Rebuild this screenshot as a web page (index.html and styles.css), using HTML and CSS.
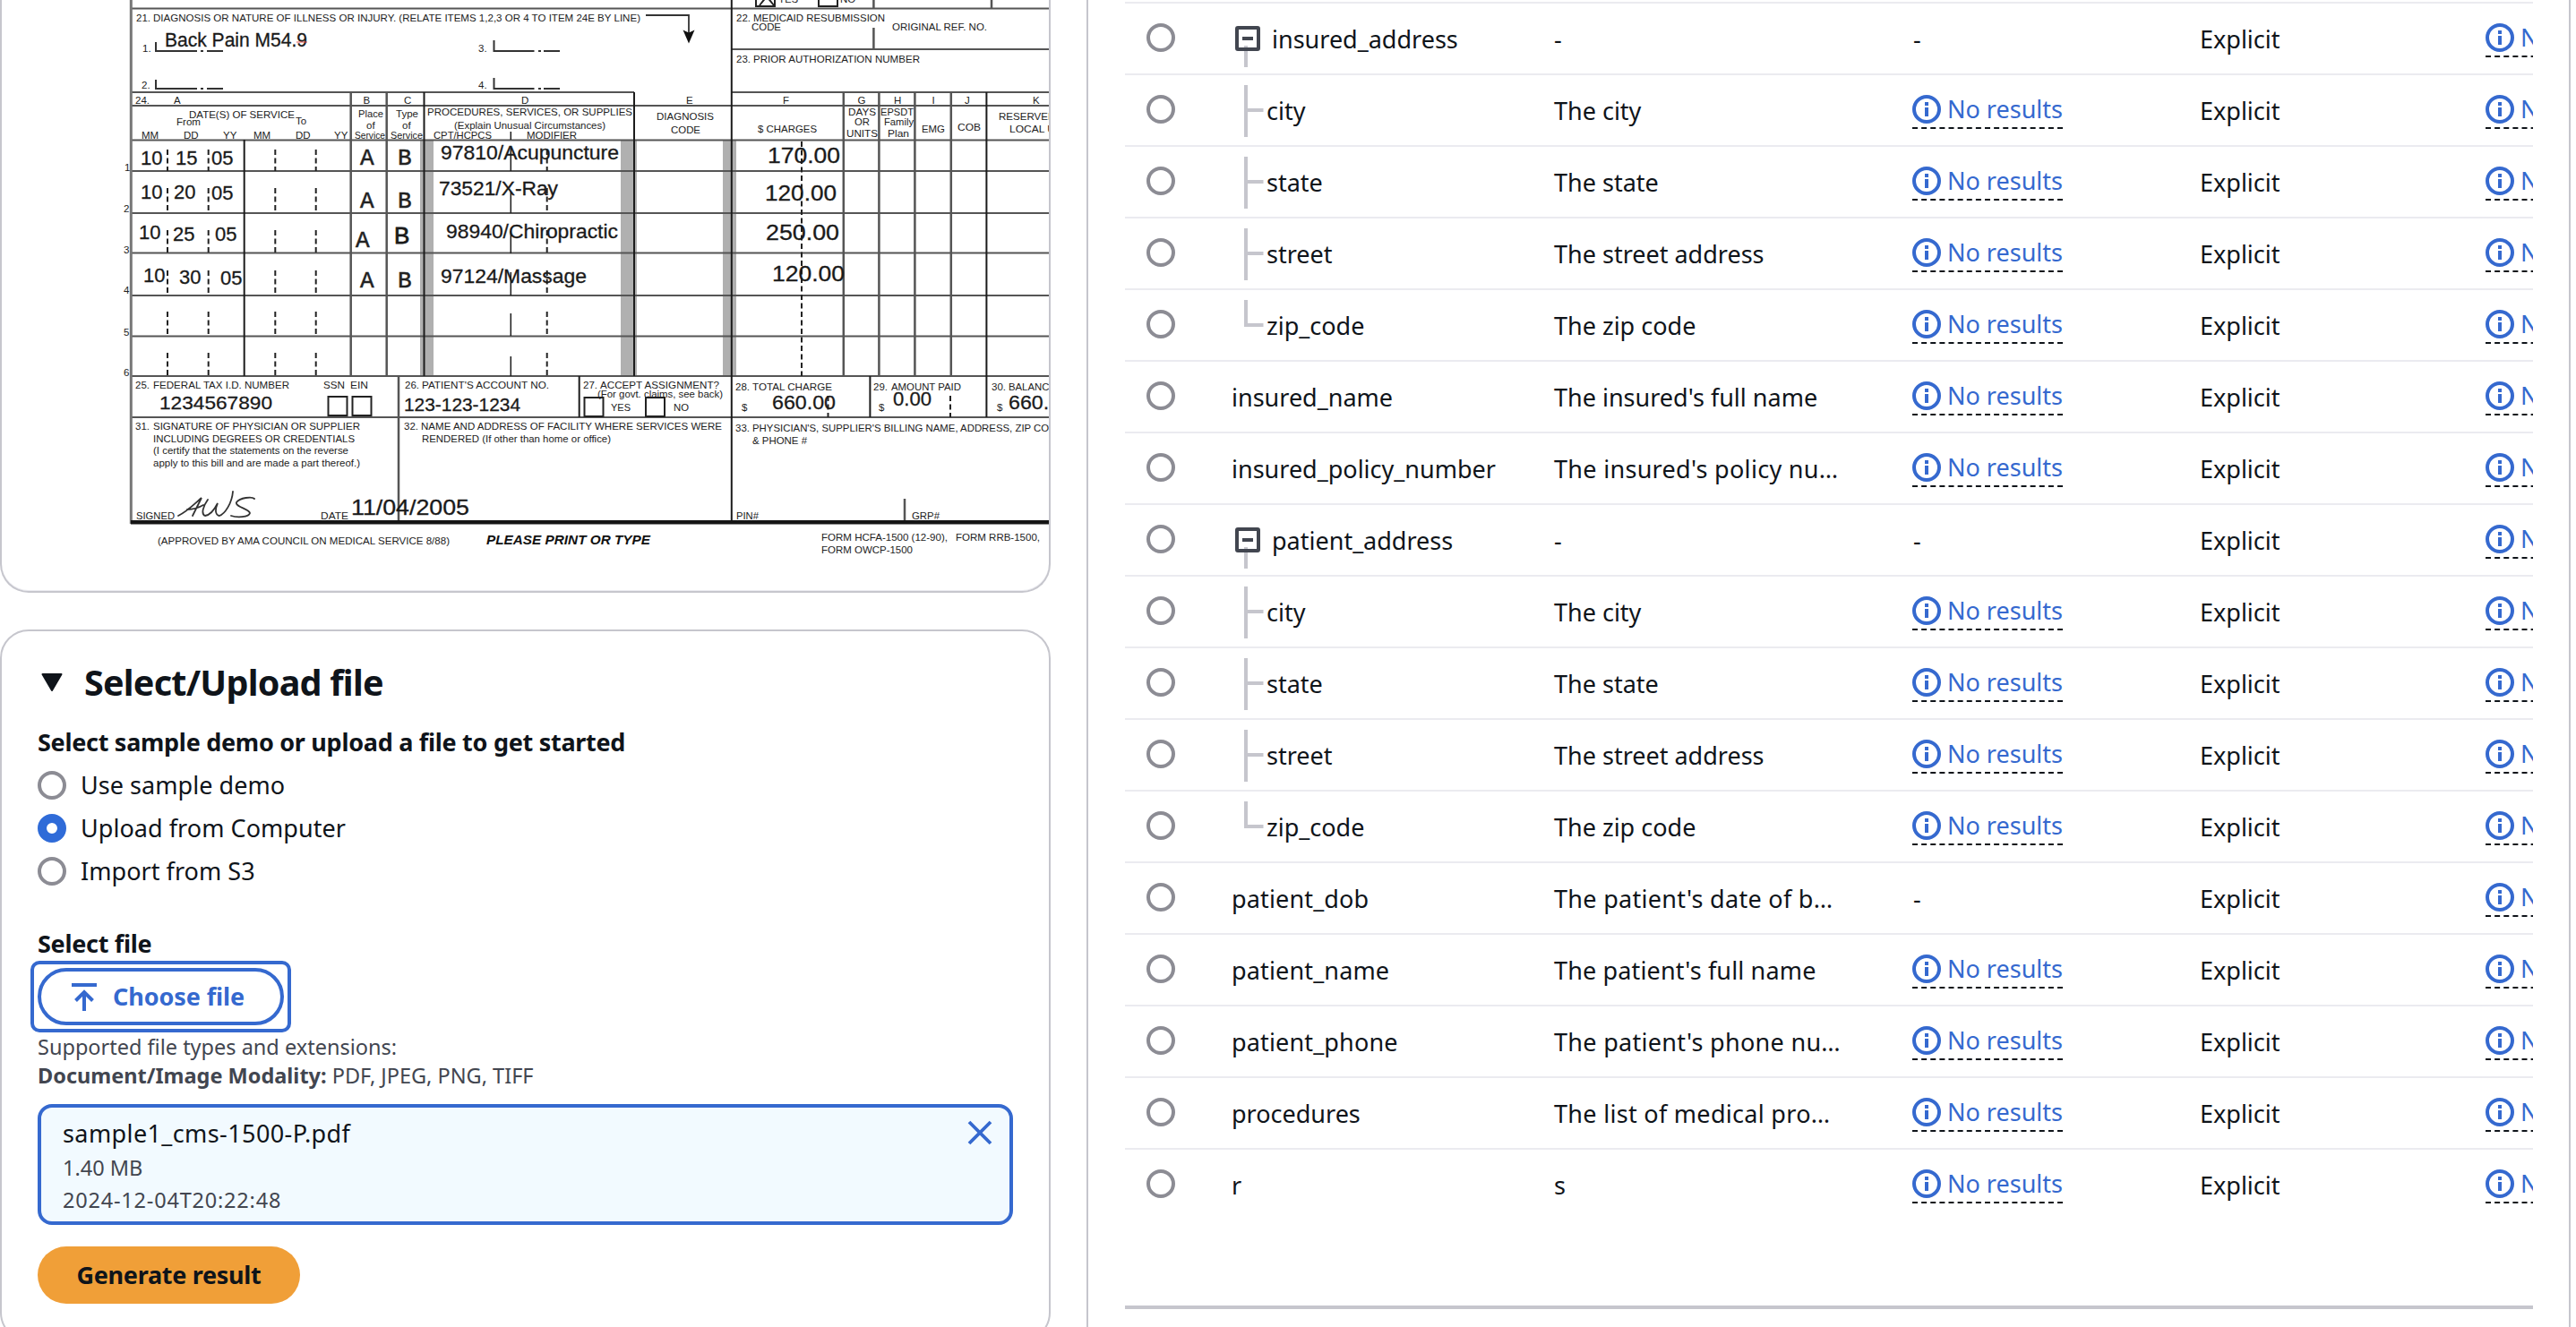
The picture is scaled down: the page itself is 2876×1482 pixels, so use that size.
FILE: index.html
```html
<!DOCTYPE html>
<html lang="en">
<head>
<meta charset="utf-8">
<title>Document processing</title>
<link rel="stylesheet" href="styles.css">
</head>
<body>
<svg width="0" height="0" class="defs">
  <symbol id="info" viewBox="0 0 32 32"><circle cx="16" cy="16" r="14" fill="none" stroke="currentColor" stroke-width="4"/><path d="M14 8h4v4h-4zM14 14h4v10h-4z" fill="currentColor"/></symbol>
  <symbol id="branch" viewBox="0 0 39 78"><path d="M17 11v58M17 39h19.500" fill="none" stroke="#c6c6cd" stroke-width="4"/></symbol>
  <symbol id="leaf" viewBox="0 0 39 78"><path d="M17 11v28h19.500" fill="none" stroke="#c6c6cd" stroke-width="4"/></symbol>
  <symbol id="root" viewBox="0 0 45 78"><path d="M17 47v24" stroke="#c6c6cd" stroke-width="4"/><rect x="7" y="27" width="24" height="24" rx="1" fill="none" stroke="#424650" stroke-width="4"/><path d="M13 39h12" stroke="#424650" stroke-width="4"/></symbol>
</svg>
<div class="page">
<div class="left">
<section class="card preview">
<svg class="form" width="1173" height="660" viewBox="0 0 1173 660">
  <g fill="#b0b0b0"><path d="M469 156h15v264h-15zM693 156h18v264h-18zM807 156h15v264h-15z"/></g>
  <g stroke="#555" stroke-width="2" fill="none">
    <path d="M146 9.500H1172M146 118H1172M146 156.500H1172M146 191H1172M146 238H1172M146 282.500H1172M146 330H1172M146 375.500H1172M146 420H1172M146 466H1172M146 103H708M817 103H1172M817 55H1172"/>
    <path d="M391.700 103V420M431.700 103V420M941.800 103V420M981.400 103V420M1021.400 103V420M1061.800 103V420M445 420V583M1010 557V583M975.400 0V9M975.400 31V55M1107 0V9" stroke-width="2.500"/>
    <path d="M146.300 0V585" stroke="#777" stroke-width="3"/>
  </g>
  <g stroke="#1c1c1c" stroke-width="2" fill="none">
    <path d="M272.700 156V420M473.500 103V420M708 103V420M816.800 0V583M1101.400 103V466M646.700 420V466M971.400 420V466"/>
    <path d="M570.300 147v9M570.300 163v28M570.300 214v24M570.300 258v25M570.300 304v26M570.300 350v25M570.300 398v22" stroke-width="1.500"/>
    <path d="M174 47v10h46M224 57h3M231 57h18M174 89v10h46M224 99h3M231 99h18M551.500 45v12h45M601 57h3M607 57h18M551.500 87v12h45M601 99h3M607 99h18" stroke="#333"/>
    <path d="M721 17h48v20" stroke="#333" stroke-width="1.800"/>
  </g>
  <path d="M762.500 33.500l6.500 3 6.500-3-6.500 15z" fill="#111"/>
  <path d="M146 583.300H1172" stroke="#151515" stroke-width="4.500"/>
  <g stroke="#222" stroke-width="2" stroke-dasharray="6 3.500" fill="none">
    <path d="M187 167v24M232.700 167v24M307.300 167v24M352.700 167v24M610.700 167v24"/>
    <path d="M187 210v28M232.700 210v28M307.300 210v28M352.700 210v28M610.700 210v28"/>
    <path d="M187 257v25M232.700 257v25M307.300 257v25M352.700 257v25M610.700 257v25"/>
    <path d="M187 302v28M232.700 302v28M307.300 302v28M352.700 302v28M610.700 302v28"/>
    <path d="M187 348v27M232.700 348v27M307.300 348v27M352.700 348v27M610.700 348v27"/>
    <path d="M187 394v26M232.700 394v26M307.300 394v26M352.700 394v26M610.700 394v26"/>
    <path d="M895 158V420M924.500 442v24M1061 442v24"/>
  </g>
  <g fill="#fff" stroke="#222" stroke-width="2">
    <path d="M844-8h21v15h-21zM914-8h21v15h-21zM366.500 443h21v21h-21zM393.500 443h21v21h-21zM652.500 444h21v21h-21zM721 444h21v21h-21z"/>
    <path d="M848 6l8-10 8 10" fill="none"/>
  </g>
  <g class="tiny">
    <text x="869" y="3" textLength="22" lengthAdjust="spacingAndGlyphs">YES</text><text x="938" y="3">NO</text>
    <text x="152" y="24">21.</text><text x="171" y="24" textLength="544" lengthAdjust="spacingAndGlyphs">DIAGNOSIS OR NATURE OF ILLNESS OR INJURY. (RELATE ITEMS 1,2,3 OR 4 TO ITEM 24E BY LINE)</text>
    <text x="159" y="58">1.</text><text x="158" y="99">2.</text><text x="534" y="58">3.</text><text x="534" y="99">4.</text>
    <text x="822" y="24">22.</text><text x="841" y="24" textLength="147" lengthAdjust="spacingAndGlyphs">MEDICAID RESUBMISSION</text><text x="839" y="34" textLength="33" lengthAdjust="spacingAndGlyphs">CODE</text>
    <text x="996" y="33.500" textLength="106" lengthAdjust="spacingAndGlyphs">ORIGINAL REF. NO.</text>
    <text x="822" y="70">23.</text><text x="841" y="70" textLength="186" lengthAdjust="spacingAndGlyphs">PRIOR AUTHORIZATION NUMBER</text>
    <text x="151" y="115.500">24.</text><text x="194" y="115.500">A</text><text x="405.500" y="115.500">B</text><text x="451" y="115.500">C</text><text x="582" y="115.500">D</text><text x="766" y="115.500">E</text><text x="874" y="115.500">F</text><text x="957.500" y="115.500">G</text><text x="998" y="115.500">H</text><text x="1040.500" y="115.500">I</text><text x="1077" y="115.500">J</text><text x="1153" y="115.500">K</text>
    <text x="211" y="132" textLength="118" lengthAdjust="spacingAndGlyphs">DATE(S) OF SERVICE</text><text x="197" y="139.500" textLength="27" lengthAdjust="spacingAndGlyphs">From</text><text x="330" y="138.500">To</text>
    <text x="158" y="155">MM</text><text x="205" y="155">DD</text><text x="249" y="155">YY</text><text x="283" y="155">MM</text><text x="330" y="155">DD</text><text x="373" y="155">YY</text>
    <text x="400" y="130.500" textLength="28" lengthAdjust="spacingAndGlyphs">Place</text><text x="409" y="143.500">of</text><text x="396" y="155" textLength="34" lengthAdjust="spacingAndGlyphs">Service</text>
    <text x="442" y="130.500" textLength="25" lengthAdjust="spacingAndGlyphs">Type</text><text x="449" y="143.500">of</text><text x="436" y="155" textLength="36" lengthAdjust="spacingAndGlyphs">Service</text>
    <text x="477" y="129" textLength="229" lengthAdjust="spacingAndGlyphs">PROCEDURES, SERVICES, OR SUPPLIES</text><text x="507" y="143.500" textLength="169" lengthAdjust="spacingAndGlyphs">(Explain Unusual Circumstances)</text><text x="484" y="155" textLength="65" lengthAdjust="spacingAndGlyphs">CPT/HCPCS</text><text x="588" y="155" textLength="56" lengthAdjust="spacingAndGlyphs">MODIFIER</text>
    <text x="733" y="134" textLength="64" lengthAdjust="spacingAndGlyphs">DIAGNOSIS</text><text x="749" y="149" textLength="33" lengthAdjust="spacingAndGlyphs">CODE</text>
    <text x="846" y="147.500" textLength="66" lengthAdjust="spacingAndGlyphs">$ CHARGES</text>
    <text x="947" y="129" textLength="31" lengthAdjust="spacingAndGlyphs">DAYS</text><text x="954" y="140" textLength="17" lengthAdjust="spacingAndGlyphs">OR</text><text x="945" y="153" textLength="35" lengthAdjust="spacingAndGlyphs">UNITS</text>
    <text x="983" y="129" textLength="37" lengthAdjust="spacingAndGlyphs">EPSDT</text><text x="987" y="140" textLength="33" lengthAdjust="spacingAndGlyphs">Family</text><text x="991" y="153" textLength="24" lengthAdjust="spacingAndGlyphs">Plan</text>
    <text x="1029" y="147.500" textLength="26" lengthAdjust="spacingAndGlyphs">EMG</text><text x="1069" y="146" textLength="26" lengthAdjust="spacingAndGlyphs">COB</text>
    <text x="1115" y="134" textLength="91" lengthAdjust="spacingAndGlyphs">RESERVED FOR</text><text x="1127" y="147.500" textLength="67" lengthAdjust="spacingAndGlyphs">LOCAL USE</text>
    <text x="139" y="191">1</text><text x="138" y="237">2</text><text x="138" y="283">3</text><text x="138" y="328">4</text><text x="138" y="375">5</text><text x="138" y="420">6</text>
    <text x="151" y="434">25.</text><text x="171" y="434" textLength="152" lengthAdjust="spacingAndGlyphs">FEDERAL TAX I.D. NUMBER</text><text x="361" y="434" textLength="24" lengthAdjust="spacingAndGlyphs">SSN</text><text x="391" y="434" textLength="20" lengthAdjust="spacingAndGlyphs">EIN</text>
    <text x="452" y="434">26.</text><text x="471" y="434" textLength="142" lengthAdjust="spacingAndGlyphs">PATIENT'S ACCOUNT NO.</text>
    <text x="651" y="434">27.</text><text x="670" y="434" textLength="133" lengthAdjust="spacingAndGlyphs">ACCEPT ASSIGNMENT?</text><text x="667" y="444" textLength="140" lengthAdjust="spacingAndGlyphs">(For govt. claims, see back)</text><text x="682" y="459" textLength="22" lengthAdjust="spacingAndGlyphs">YES</text><text x="752" y="459" textLength="17" lengthAdjust="spacingAndGlyphs">NO</text>
    <text x="821" y="436">28.</text><text x="840" y="436" textLength="89" lengthAdjust="spacingAndGlyphs">TOTAL CHARGE</text><text x="828" y="459">$</text>
    <text x="975" y="436">29.</text><text x="995" y="436" textLength="78" lengthAdjust="spacingAndGlyphs">AMOUNT PAID</text><text x="981" y="459">$</text>
    <text x="1107" y="436">30.</text><text x="1126" y="436" textLength="80" lengthAdjust="spacingAndGlyphs">BALANCE DUE</text><text x="1113" y="459">$</text>
    <text x="151" y="480">31.</text><text x="171" y="480" textLength="231" lengthAdjust="spacingAndGlyphs">SIGNATURE OF PHYSICIAN OR SUPPLIER</text><text x="171" y="493.500" textLength="225" lengthAdjust="spacingAndGlyphs">INCLUDING DEGREES OR CREDENTIALS</text><text x="171" y="507" textLength="218" lengthAdjust="spacingAndGlyphs">(I certify that the statements on the reverse</text><text x="171" y="520.500" textLength="231" lengthAdjust="spacingAndGlyphs">apply to this bill and are made a part thereof.)</text>
    <text x="451" y="480">32.</text><text x="470" y="480" textLength="336" lengthAdjust="spacingAndGlyphs">NAME AND ADDRESS OF FACILITY WHERE SERVICES WERE</text><text x="471" y="494" textLength="211" lengthAdjust="spacingAndGlyphs">RENDERED (If other than home or office)</text>
    <text x="821" y="482">33.</text><text x="840" y="482" textLength="347" lengthAdjust="spacingAndGlyphs">PHYSICIAN'S, SUPPLIER'S BILLING NAME, ADDRESS, ZIP CODE</text><text x="840" y="495.500" textLength="61" lengthAdjust="spacingAndGlyphs">&amp; PHONE #</text>
    <text x="152" y="579.500" textLength="43" lengthAdjust="spacingAndGlyphs">SIGNED</text><text x="358" y="579.500" textLength="31" lengthAdjust="spacingAndGlyphs">DATE</text><text x="822" y="579.500" textLength="25" lengthAdjust="spacingAndGlyphs">PIN#</text><text x="1018" y="579.500" textLength="31" lengthAdjust="spacingAndGlyphs">GRP#</text>
    <text x="176" y="608" textLength="326" lengthAdjust="spacingAndGlyphs">(APPROVED BY AMA COUNCIL ON MEDICAL SERVICE 8/88)</text>
    <text x="917" y="604" textLength="141" lengthAdjust="spacingAndGlyphs">FORM HCFA-1500 (12-90),</text><text x="1067" y="604" textLength="94" lengthAdjust="spacingAndGlyphs">FORM RRB-1500,</text><text x="917" y="617.500" textLength="102" lengthAdjust="spacingAndGlyphs">FORM OWCP-1500</text>
  </g>
  <text class="print" x="543" y="608" textLength="183" lengthAdjust="spacingAndGlyphs">PLEASE PRINT OR TYPE</text>
  <g class="entry">
    <text x="184" y="52" textLength="159" lengthAdjust="spacingAndGlyphs">Back Pain M54.9</text>
    <text x="157" y="183.500">10</text><text x="196" y="183.500">15</text><text x="236" y="183.500">05</text>
    <text x="157" y="222">10</text><text x="194" y="222">20</text><text x="236" y="223">05</text>
    <text x="155" y="267">10</text><text x="193" y="269">25</text><text x="240" y="269">05</text>
    <text x="160" y="315">10</text><text x="200" y="317">30</text><text x="246" y="318">05</text>
    <text x="440" y="271.500" class="big">B</text>
    <text x="492" y="178" textLength="199" lengthAdjust="spacingAndGlyphs">97810/Acupuncture</text>
    <text x="490" y="218" textLength="133" lengthAdjust="spacingAndGlyphs">73521/X-Ray</text>
    <text x="498" y="266" textLength="192" lengthAdjust="spacingAndGlyphs">98940/Chiropractic</text>
    <text x="492" y="315.500" textLength="163" lengthAdjust="spacingAndGlyphs">97124/Massage</text>
    <text x="178" y="456.500" textLength="126" lengthAdjust="spacingAndGlyphs" class="sm">1234567890</text>
    <text x="451" y="458.500" textLength="130" lengthAdjust="spacingAndGlyphs" class="sm">123-123-1234</text>
    <text x="392" y="575" textLength="132" lengthAdjust="spacingAndGlyphs" class="lg">11/04/2005</text>
    <text x="857" y="181.500" textLength="81" lengthAdjust="spacingAndGlyphs" class="lg">170.00</text>
    <text x="854" y="224" textLength="80" lengthAdjust="spacingAndGlyphs" class="lg">120.00</text>
    <text x="855" y="268" textLength="82" lengthAdjust="spacingAndGlyphs" class="lg">250.00</text>
    <text x="862" y="313.500" textLength="81" lengthAdjust="spacingAndGlyphs" class="lg">120.00</text>
    <text x="862" y="457" textLength="71" lengthAdjust="spacingAndGlyphs">660.00</text>
    <text x="997" y="453" textLength="43" lengthAdjust="spacingAndGlyphs">0.00</text>
    <text x="1126" y="457" textLength="71" lengthAdjust="spacingAndGlyphs">660.00</text>
  </g>
  <path d="M331 47h12" stroke="#e04040" stroke-width="1.500" opacity=".6"/>
  <g class="mono">
    <text x="402" y="184">A</text><text x="444" y="184">B</text><text x="402" y="232">A</text><text x="444" y="232">B</text><text x="397" y="276">A</text><text x="402" y="321">A</text><text x="444" y="321">B</text>
  </g>
  <path d="M199 576c9-4 18-13 26-20l-10 20M209 569c6 0 13-2 18-5M232 558c-5 7-8 16-3 18 6-1 11-8 14-14-3 7-3 13 2 14 6-2 14-14 15-27M284 557c-3-3-16-1-20 4-2 5 14 7 15 12-1 5-15 5-21 3" fill="none" stroke="#333" stroke-width="1.800" stroke-linecap="round"/>
</svg>
</section>
<section class="card upload">
  <h2 class="heading"><svg width="24" height="21" viewBox="0 0 24 21"><path d="M1.500 1h21L12 19z" fill="#0f141a" stroke="#0f141a" stroke-width="2" stroke-linejoin="round"/></svg><span>Select/Upload file</span></h2>
  <div class="label">Select sample demo or upload a file to get started</div>
  <div class="radios">
    <label class="choice"><span class="radio"></span>Use sample demo</label>
    <label class="choice"><span class="radio checked"></span>Upload from Computer</label>
    <label class="choice"><span class="radio"></span>Import from S3</label>
  </div>
  <div class="label select">Select file</div>
  <button class="choose"><svg width="28" height="32" viewBox="0 0 28 32"><path d="M0 3h28M14 32V11M4.500 20.500L14 11l9.500 9.500" fill="none" stroke="currentColor" stroke-width="4"/></svg><span>Choose file</span></button>
  <div class="hint"><div>Supported file types and extensions:</div><div><b>Document/Image Modality:</b> PDF, JPEG, PNG, TIFF</div></div>
  <div class="file">
    <div class="meta"><div class="fname">sample1_cms-1500-P.pdf</div><div class="size">1.40 MB</div><div class="date">2024-12-04T20:22:48</div></div>
    <svg class="close" width="28" height="28" viewBox="0 0 28 28"><path d="M2 2l24 24M26 2L2 26" stroke="currentColor" stroke-width="3.800"/></svg>
  </div>
  <button class="generate"><span>Generate result</span></button>
</section>
</div>
<section class="results">
<div class="table">
  <div class="row"><i class="radio"></i><div class="name"><svg width="45" height="78"><use href="#root"/></svg><span>insured_address</span></div><div class="cell">-</div><div class="cell">-</div><div class="cell">Explicit</div><div class="last"><a class="none"><svg><use href="#info"/></svg>No results</a></div></div>
  <div class="row"><i class="radio"></i><div class="name"><svg width="39" height="78"><use href="#branch"/></svg><span>city</span></div><div class="cell">The city</div><div><a class="none"><svg><use href="#info"/></svg>No results</a></div><div class="cell">Explicit</div><div class="last"><a class="none"><svg><use href="#info"/></svg>No results</a></div></div>
  <div class="row"><i class="radio"></i><div class="name"><svg width="39" height="78"><use href="#branch"/></svg><span>state</span></div><div class="cell">The state</div><div><a class="none"><svg><use href="#info"/></svg>No results</a></div><div class="cell">Explicit</div><div class="last"><a class="none"><svg><use href="#info"/></svg>No results</a></div></div>
  <div class="row"><i class="radio"></i><div class="name"><svg width="39" height="78"><use href="#branch"/></svg><span>street</span></div><div class="cell">The street address</div><div><a class="none"><svg><use href="#info"/></svg>No results</a></div><div class="cell">Explicit</div><div class="last"><a class="none"><svg><use href="#info"/></svg>No results</a></div></div>
  <div class="row"><i class="radio"></i><div class="name"><svg width="39" height="78"><use href="#leaf"/></svg><span>zip_code</span></div><div class="cell">The zip code</div><div><a class="none"><svg><use href="#info"/></svg>No results</a></div><div class="cell">Explicit</div><div class="last"><a class="none"><svg><use href="#info"/></svg>No results</a></div></div>
  <div class="row"><i class="radio"></i><div class="name"><span>insured_name</span></div><div class="cell">The insured's full name</div><div><a class="none"><svg><use href="#info"/></svg>No results</a></div><div class="cell">Explicit</div><div class="last"><a class="none"><svg><use href="#info"/></svg>No results</a></div></div>
  <div class="row"><i class="radio"></i><div class="name"><span>insured_policy_number</span></div><div class="cell trunc">The insured's policy nu…</div><div><a class="none"><svg><use href="#info"/></svg>No results</a></div><div class="cell">Explicit</div><div class="last"><a class="none"><svg><use href="#info"/></svg>No results</a></div></div>
  <div class="row"><i class="radio"></i><div class="name"><svg width="45" height="78"><use href="#root"/></svg><span>patient_address</span></div><div class="cell">-</div><div class="cell">-</div><div class="cell">Explicit</div><div class="last"><a class="none"><svg><use href="#info"/></svg>No results</a></div></div>
  <div class="row"><i class="radio"></i><div class="name"><svg width="39" height="78"><use href="#branch"/></svg><span>city</span></div><div class="cell">The city</div><div><a class="none"><svg><use href="#info"/></svg>No results</a></div><div class="cell">Explicit</div><div class="last"><a class="none"><svg><use href="#info"/></svg>No results</a></div></div>
  <div class="row"><i class="radio"></i><div class="name"><svg width="39" height="78"><use href="#branch"/></svg><span>state</span></div><div class="cell">The state</div><div><a class="none"><svg><use href="#info"/></svg>No results</a></div><div class="cell">Explicit</div><div class="last"><a class="none"><svg><use href="#info"/></svg>No results</a></div></div>
  <div class="row"><i class="radio"></i><div class="name"><svg width="39" height="78"><use href="#branch"/></svg><span>street</span></div><div class="cell">The street address</div><div><a class="none"><svg><use href="#info"/></svg>No results</a></div><div class="cell">Explicit</div><div class="last"><a class="none"><svg><use href="#info"/></svg>No results</a></div></div>
  <div class="row"><i class="radio"></i><div class="name"><svg width="39" height="78"><use href="#leaf"/></svg><span>zip_code</span></div><div class="cell">The zip code</div><div><a class="none"><svg><use href="#info"/></svg>No results</a></div><div class="cell">Explicit</div><div class="last"><a class="none"><svg><use href="#info"/></svg>No results</a></div></div>
  <div class="row"><i class="radio"></i><div class="name wide"><span>patient_dob</span></div><div class="cell trunc">The patient's date of b…</div><div class="cell">-</div><div class="cell">Explicit</div><div class="last"><a class="none"><svg><use href="#info"/></svg>No results</a></div></div>
  <div class="row"><i class="radio"></i><div class="name wide"><span>patient_name</span></div><div class="cell wide">The patient's full name</div><div><a class="none"><svg><use href="#info"/></svg>No results</a></div><div class="cell">Explicit</div><div class="last"><a class="none"><svg><use href="#info"/></svg>No results</a></div></div>
  <div class="row"><i class="radio"></i><div class="name wide"><span>patient_phone</span></div><div class="cell trunc">The patient's phone nu…</div><div><a class="none"><svg><use href="#info"/></svg>No results</a></div><div class="cell">Explicit</div><div class="last"><a class="none"><svg><use href="#info"/></svg>No results</a></div></div>
  <div class="row"><i class="radio"></i><div class="name"><span>procedures</span></div><div class="cell trunc">The list of medical pro…</div><div><a class="none"><svg><use href="#info"/></svg>No results</a></div><div class="cell">Explicit</div><div class="last"><a class="none"><svg><use href="#info"/></svg>No results</a></div></div>
  <div class="row"><i class="radio"></i><div class="name"><span>r</span></div><div class="cell">s</div><div><a class="none"><svg><use href="#info"/></svg>No results</a></div><div class="cell">Explicit</div><div class="last"><a class="none"><svg><use href="#info"/></svg>No results</a></div></div>
</div>
<div class="scrollbar"></div>
</section>
</div>
</body>
</html>
```
FILE: styles.css
```css
* { box-sizing: border-box; }
body { margin: 0; background: #fff; color: #0f141a; font-family: "Noto Sans", "Open Sans", sans-serif; font-size: 27px; line-height: 40px; overflow: hidden; }
.defs { display: block; height: 0; }
.page { display: flex; gap: 40px; width: 2870px; height: 1482px; overflow: hidden; }
.left { width: 1173px; flex: none; display: flex; flex-direction: column; gap: 41px; }
.card { border: 2px solid #c6c6cd; flex: none; background: #fff; }
.preview { height: 662px; border-top: 0; border-radius: 0 0 32px 32px; overflow: hidden; box-shadow: inset 0 -1px #ebebf0; }
.form { display: block; margin-left: -2px; width: 1173px; height: 660px; font-family: "Liberation Sans", Arial, sans-serif; }
.tiny { font-size: 11.5px; fill: #222; }
.entry { font-size: 22px; fill: #1a1a1a; stroke: #1a1a1a; stroke-width: .3px; }
.entry .sm { font-size: 21px; }
.entry .lg { font-size: 24px; }
.entry .big { font-size: 26px; stroke-width: .8px; }
.print { font-size: 15px; font-weight: 700; font-style: italic; fill: #111; }
.mono { font-family: "Liberation Mono", "Courier New", monospace; font-size: 26px; fill: #222; stroke: #222; stroke-width: .5px; }

.upload { height: 795px; border-radius: 32px; padding: 32px 40px 40px; display: flex; flex-direction: column; align-items: flex-start; }
.heading { margin: 0 0 0 4px; height: 50px; display: flex; align-items: center; gap: 24px; font-size: 39.500px; line-height: 50px; font-weight: 700; letter-spacing: -0.75px; }
.label { font-weight: 700; height: 40px; margin-top: 22px; letter-spacing: -0.28px; }
.radios { display: flex; flex-direction: column; gap: 8px; margin-top: 8px; }
.choice { display: flex; align-items: center; gap: 16px; height: 40px; letter-spacing: .05px; }
.radio { width: 32px; height: 32px; border: 4px solid #8c8c94; border-radius: 50%; flex: none; display: block; background: #fff; }
.radio.checked { border: 10px solid #2f6bd8; }
.label.select { margin-top: 41px; }
button { font: inherit; }
.choose { position: relative; margin-top: 7px; width: 275px; height: 64px; border: 4px solid #3569cf; border-radius: 32px; background: #fff; color: #3569cf; font-weight: 700; display: flex; align-items: center; gap: 18px; padding: 0 0 0 34px; outline: none; letter-spacing: -.1px; }
.choose::after { content: ""; position: absolute; inset: -12px; border: 4px solid #3569cf; border-radius: 10px; }
.hint { color: #424650; font-size: 23.500px; line-height: 32px; margin-top: 8px; }
.file { margin-top: 16px; width: 1089px; height: 136px; border: 4px solid #3569cf; border-radius: 16px; background: #f2faff; display: flex; justify-content: space-between; padding: 9px 19px 0 24px; }
.fname { letter-spacing: .4px; }
.file .size, .file .date { font-size: 23.500px; line-height: 36px; color: #424650; }
.file .date { letter-spacing: .8px; }
.close { color: #3569cf; margin-top: 5px; }
.generate { margin-top: 24px; width: 293px; height: 64px; border: 0; border-radius: 32px; background: #f09f38; color: #0f141a; font-weight: 700; padding: 0; letter-spacing: -.3px; }

.results { width: 1657px; flex: none; border: solid #c6c6cd; border-width: 0 2px; height: 1482px; padding: 2px 40px 0 41px; }
.table { overflow: hidden; }
.row { display: grid; grid-template-columns: 118px 360px 401px 320px 320px 53px; height: 80px; border-top: 2px solid #ebebf0; align-items: center; white-space: nowrap; }
.row .radio { margin-left: 24px; margin-top: -2px; }
.name { display: flex; align-items: center; }
.name span, .cell { padding: 1px 0 0 1px; }
.wide { letter-spacing: .15px; }
.trunc { letter-spacing: .3px; }
.last { overflow: hidden; }
.none { display: flex; width: 168px; height: 42px; align-items: center; gap: 7px; color: #3569cf; border-bottom: 2px dashed #0f141a; }
.none svg { width: 32px; height: 32px; flex: none; }
.scrollbar { margin-top: 96px; height: 4px; background: #c6c6cd; }
```
